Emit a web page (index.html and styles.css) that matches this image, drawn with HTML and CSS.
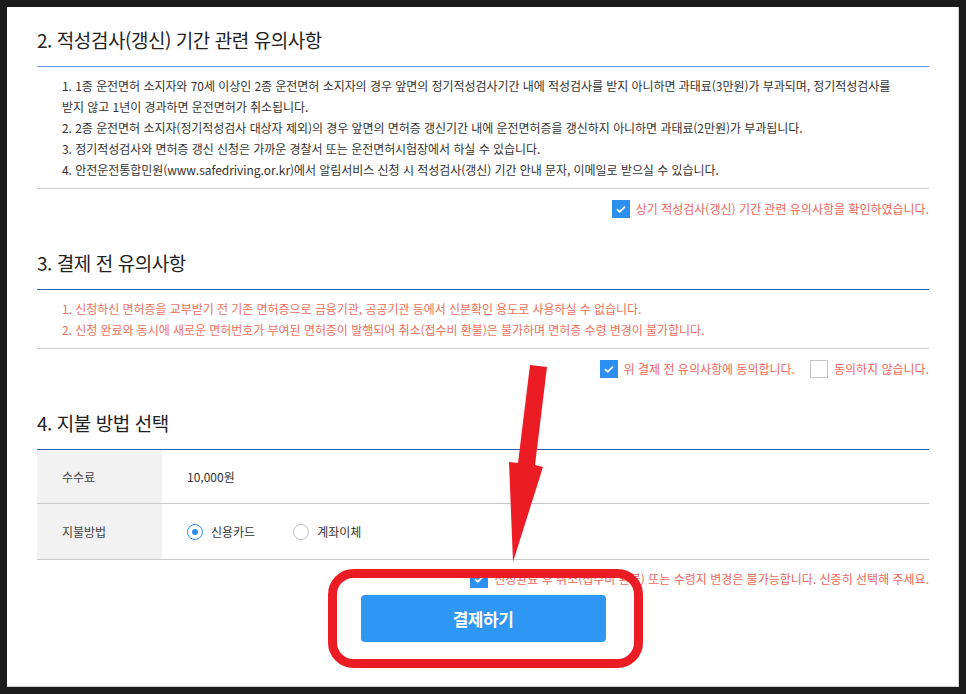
FILE: index.html
```html
<!DOCTYPE html>
<html lang="ko">
<head>
  <meta charset="UTF-8" />
  <meta name="viewport" content="width=device-width, initial-scale=1.0"/>
  <title>적성검사(갱신) 신청 - 결제</title>
  <link rel="stylesheet" href="styles.css">
</head>
<body>

<div class="panel">

  <!-- 2. 적성검사 -->
  <section class="section">
    <h2>2. 적성검사(갱신) 기간 관련 유의사항</h2>
    <ol class="notice">
      <li>1. 1종 운전면허 소지자와 70세 이상인 2종 운전면허 소지자의 경우 앞면의 정기적성검사기간 내에 적성검사를 받지 아니하면 과태료(3만원)가 부과되며, 정기적성검사를<br>받지 않고 1년이 경과하면 운전면허가 취소됩니다.</li>
      <li>2. 2종 운전면허 소지자(정기적성검사 대상자 제외)의 경우 앞면의 면허증 갱신기간 내에 운전면허증을 갱신하지 아니하면 과태료(2만원)가 부과됩니다.</li>
      <li>3. 정기적성검사와 면허증 갱신 신청은 가까운 경찰서 또는 운전면허시험장에서 하실 수 있습니다.</li>
      <li>4. 안전운전통합민원(www.safedriving.or.kr)에서 알림서비스 신청 시 적성검사(갱신) 기간 안내 문자, 이메일로 받으실 수 있습니다.</li>
    </ol>
    <div class="agree">
      <label class="check"><span class="box checked"></span>상기 적성검사(갱신) 기간 관련 유의사항을 확인하였습니다.</label>
    </div>
  </section>

  <!-- 3. 결제 전 -->
  <section class="section">
    <h2>3. 결제 전 유의사항</h2>
    <ol class="notice red">
      <li>1. 신청하신 면허증을 교부받기 전 기존 면허증으로 금융기관, 공공기관 등에서 신분확인 용도로 사용하실 수 없습니다.</li>
      <li>2. 신청 완료와 동시에 새로운 면허번호가 부여된 면허증이 발행되어 취소(접수비 환불)은 불가하며 면허증 수령 변경이 불가합니다.</li>
    </ol>
    <div class="agree">
      <label class="check"><span class="box checked"></span>위 결제 전 유의사항에 동의합니다.</label>
      <label class="check"><span class="box"></span>동의하지 않습니다.</label>
    </div>
  </section>

  <!-- 4. 지불 방법 -->
  <section class="section">
    <h2>4. 지불 방법 선택</h2>
    <table class="pay-table">
      <tr>
        <th>수수료</th>
        <td>10,000원</td>
      </tr>
      <tr>
        <th>지불방법</th>
        <td>
          <div class="radios">
            <label class="radio"><span class="dot checked"></span>신용카드</label>
            <label class="radio"><span class="dot"></span>계좌이체</label>
          </div>
        </td>
      </tr>
    </table>
    <div class="agree final">
      <label class="check"><span class="box checked"></span>신청완료 후 취소(접수비 환불) 또는 수령지 변경은 불가능합니다. 신중히 선택해 주세요.</label>
    </div>
    <div class="btn-wrap">
      <button class="pay-button">결제하기</button>
    </div>
  </section>

</div>

<!-- 강조 표시 -->
<svg class="markup" width="966" height="694" viewBox="0 0 966 694">
  <polygon points="530,365 547,367 535,465 543,467 513,562 509,462 518,463" fill="#ec1c24"/>
  <rect x="332.5" y="573.5" width="306" height="90" rx="21" fill="none" stroke="#ec1c24" stroke-width="9"/>
</svg>

</body>
</html>
```

FILE: styles.css
```css
* { box-sizing: border-box; }

body, html {
  margin: 0;
  padding: 0;
  height: 100%;
  overflow: hidden;
  font-family: "Noto Sans CJK KR", "Noto Sans", sans-serif;
  background-color: #1b1b1b;
  color: #333;
}

body { padding: 7px 0 0 7px; }

.panel {
  width: 952px;
  height: 680px;
  background: #fff;
  border-right: 1px solid #cfcfcf;
  border-bottom: 1px solid #cfcfcf;
  padding: 19px 29px 0 30px;
}

.section h2 {
  margin: 0;
  font-size: 19px;
  line-height: 28px;
  font-weight: normal;
  letter-spacing: -0.45px;
  color: #222;
  padding-bottom: 12px;
}

.section + .section { margin-top: 31px; }

.notice {
  list-style: none;
  margin: 0;
  padding: 8px 0 8px 25px;
  border-top: 1px solid #6b98d8;
  border-bottom: 1px solid #cccccc;
  font-size: 12px;
  line-height: 21px;
  letter-spacing: -0.05px;
  color: #333;
}

.section + .section .notice { border-top-color: #2b63b8; }

.notice.red { color: #f0705c; }

.agree {
  display: flex;
  justify-content: flex-end;
  gap: 15px;
  margin-top: 11px;
}

.check {
  display: flex;
  align-items: center;
  gap: 6px;
  font-size: 12px;
  line-height: 18px;
  color: #f0665a;
}

.box {
  width: 18px;
  height: 18px;
  border: 1px solid #c4c4c4;
  background: #fff;
  flex: none;
}

.box.checked {
  border-color: #2d8ff0;
  background: #2d8ff0 url("data:image/svg+xml,%3Csvg xmlns='http://www.w3.org/2000/svg' width='18' height='18'%3E%3Cpath d='M4.5 9.2 L7.6 12.2 L13.4 6.2' fill='none' stroke='white' stroke-width='2'/%3E%3C/svg%3E") center/16px no-repeat;
}

.pay-table {
  width: 100%;
  border-collapse: collapse;
  border-top: 1px solid #2b63b8;
  font-size: 12px;
}

.pay-table th,
.pay-table td {
  height: 56px;
  padding: 0 0 0 25px;
  text-align: left;
  font-weight: normal;
  border-bottom: 1px solid #c8c8c8;
  color: #333;
}

.pay-table th {
  width: 125px;
  background: #f2f2f2;
  color: #444;
}

.pay-table tr:first-child th,
.pay-table tr:first-child td { height: 54px; }

.radios {
  display: flex;
  gap: 38px;
}

.radio {
  display: flex;
  align-items: center;
  gap: 8px;
}

.dot {
  width: 16px;
  height: 16px;
  border-radius: 50%;
  border: 1px solid #c2c2c2;
  background: #fff;
  position: relative;
}

.dot.checked { border-color: #2d8ff0; }

.dot.checked::after {
  content: "";
  position: absolute;
  left: 4px;
  top: 4px;
  width: 6px;
  height: 6px;
  border-radius: 50%;
  background: #2d8ff0;
}

.agree.final { margin-top: 10px; }

.btn-wrap {
  display: flex;
  justify-content: center;
  margin-top: 7px;
}

.pay-button {
  width: 245px;
  height: 47px;
  border: none;
  border-radius: 4px;
  background: #2e96f3;
  color: #fff;
  font-family: inherit;
  font-size: 17px;
  font-weight: bold;
  letter-spacing: -0.5px;
  cursor: pointer;
}

.markup {
  position: absolute;
  top: 0;
  left: 0;
  pointer-events: none;
}
```
